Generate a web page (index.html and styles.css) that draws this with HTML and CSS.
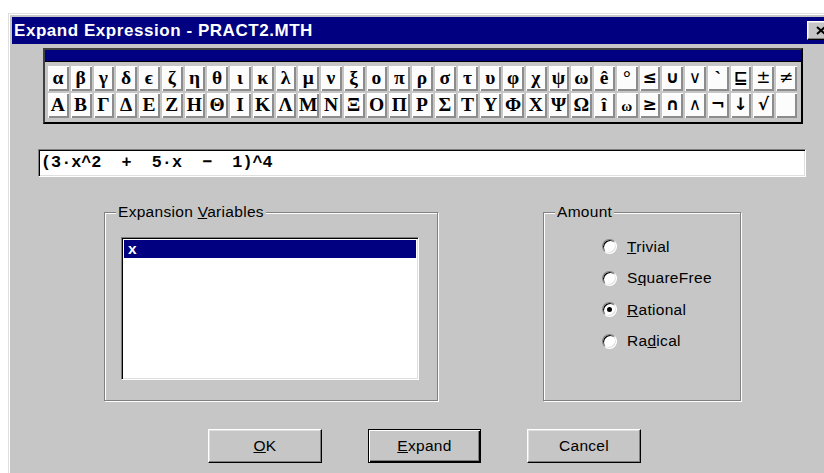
FILE: index.html
```html
<!DOCTYPE html>
<html lang="en">
<head>
<meta charset="utf-8">
<title>Expand Expression - PRACT2.MTH</title>
<link rel="stylesheet" href="styles.css">
</head>
<body>
<div class="window">
  <div class="titlebar">
    <span class="title">Expand Expression - PRACT2.MTH</span>
    <span class="close-btn">
      <svg width="10" height="9" viewBox="0 0 10 9"><path d="M1 1 L9 8 M9 1 L1 8" stroke="#000" stroke-width="2" fill="none"/></svg>
    </span>
  </div>
  <div class="client">
    <div class="palette">
      <div class="palette-caption"></div>
      <div class="symbols">
        <span class="sym">α</span><span class="sym">β</span><span class="sym">γ</span><span class="sym">δ</span><span class="sym">ϵ</span><span class="sym">ζ</span><span class="sym">η</span><span class="sym">θ</span><span class="sym">ι</span><span class="sym">κ</span><span class="sym">λ</span><span class="sym">μ</span><span class="sym">ν</span><span class="sym">ξ</span><span class="sym">ο</span><span class="sym">π</span><span class="sym">ρ</span><span class="sym">σ</span><span class="sym">τ</span><span class="sym">υ</span><span class="sym">φ</span><span class="sym">χ</span><span class="sym">ψ</span><span class="sym">ω</span><span class="sym">ê</span><span class="sym">°</span><span class="sym op">≤</span><span class="sym op">∪</span><span class="sym op thin">∨</span><span class="sym">`</span><span class="sym op">⊑</span><span class="sym op thin">±</span><span class="sym op thin">≠</span>
        <span class="sym">Α</span><span class="sym">Β</span><span class="sym">Γ</span><span class="sym">Δ</span><span class="sym">Ε</span><span class="sym">Ζ</span><span class="sym">Η</span><span class="sym">Θ</span><span class="sym">Ι</span><span class="sym">Κ</span><span class="sym">Λ</span><span class="sym">Μ</span><span class="sym">Ν</span><span class="sym">Ξ</span><span class="sym">Ο</span><span class="sym">Π</span><span class="sym">Ρ</span><span class="sym">Σ</span><span class="sym">Τ</span><span class="sym">Υ</span><span class="sym">Φ</span><span class="sym">Χ</span><span class="sym">Ψ</span><span class="sym">Ω</span><span class="sym">î</span><span class="sym small">ω</span><span class="sym op">≥</span><span class="sym op">∩</span><span class="sym op thin">∧</span><span class="sym op">¬</span><span class="sym op">↓</span><span class="sym op">√</span><span class="sym"></span>
      </div>
    </div>

    <div class="expr">(3·x^2  +  5·x  −  1)^4</div>

    <div class="groups">
      <div class="group vars">
        <span class="legend">Expansion <u>V</u>ariables</span>
        <div class="listbox">
          <div class="list-item selected">x</div>
        </div>
      </div>
      <div class="group amount">
        <span class="legend">Amount</span>
        <div class="radios">
          <div class="radio"><span class="dot"></span><span><u>T</u>rivial</span></div>
          <div class="radio"><span class="dot"></span><span>S<u>q</u>uareFree</span></div>
          <div class="radio"><span class="dot checked"></span><span><u>R</u>ational</span></div>
          <div class="radio"><span class="dot"></span><span>Ra<u>d</u>ical</span></div>
        </div>
      </div>
    </div>

    <div class="buttons">
      <div class="btn"><span><u>O</u>K</span></div>
      <div class="btn default"><span><u>E</u>xpand</span></div>
      <div class="btn"><span>Cancel</span></div>
    </div>
  </div>
</div>
</body>
</html>
```

FILE: styles.css
```css
html, body {
  margin: 0;
  padding: 0;
  width: 824px;
  height: 473px;
  overflow: hidden;
  background: #fff;
}

.window {
  box-sizing: border-box;
  width: 830px;
  height: 470px;
  margin: 13px 0 0 8px;
  padding: 3px;
  background: #c6c6c6;
  border: 1px solid;
  border-color: #dfdfdf #000 #000 #dfdfdf;
  box-shadow: inset 1px 1px 0 #fff;
  font-family: "Liberation Sans", Arial, sans-serif;
  font-size: 15.5px;
  letter-spacing: 0.3px;
  color: #000;
}

/* caption bar */
.titlebar {
  height: 27px;
  background: #000080;
  color: #fff;
  display: flex;
  align-items: center;
  justify-content: space-between;
  padding-left: 2px;
}
.title {
  font-weight: bold;
  font-size: 17px;
  letter-spacing: 0.55px;
  white-space: nowrap;
}
.close-btn {
  box-sizing: border-box;
  width: 24px;
  height: 19px;
  margin-right: 3px;
  padding-left: 3px;
  background: #c6c6c6;
  border: 1px solid;
  border-color: #fff #000 #000 #fff;
  box-shadow: inset -1px -1px 0 #808080, inset 1px 1px 0 #dfdfdf;
  display: flex;
  align-items: center;
  justify-content: center;
}

.client {
  display: flex;
  flex-direction: column;
  align-items: flex-start;
}

/* symbol palette */
.palette {
  box-sizing: border-box;
  width: 760px;
  height: 76px;
  margin: 4px 0 0 31px;
  border: 2px solid;
  border-color: #404040 #000 #000 #404040;
  display: flex;
  flex-direction: column;
}
.palette-caption {
  height: 11px;
  background: #000080;
  border-bottom: 1px solid #000;
}
.symbols {
  flex: 1;
  padding: 3px 3px 3px 2px;
  display: grid;
  grid-template-columns: repeat(33, 1fr);
  grid-template-rows: repeat(2, 27px);
  background: #c6c6c6;
}
.sym {
  display: flex;
  align-items: center;
  justify-content: center;
  background: #fcfcfc;
  box-shadow:
    inset 1px 1px 0 #c6c6c6,
    inset -1px -1px 0 #c6c6c6,
    inset 2px 2px 0 #fff,
    inset -3px -3px 0 #8c8c8c;
  font-family: "Liberation Serif", "DejaVu Serif", serif;
  font-weight: bold;
  font-size: 19.5px;
  letter-spacing: 0;
  line-height: 1;
  padding: 0 1px 2px 0;
}
.sym.op {
  font-family: "DejaVu Sans", sans-serif;
  font-size: 17px;
}
.sym.thin {
  font-weight: normal;
}
.sym.small {
  font-size: 15px;
  padding-top: 3px;
}

/* expression entry */
.expr {
  box-sizing: border-box;
  width: 768px;
  height: 28px;
  margin: 25px 0 0 26px;
  padding-left: 2px;
  background: #fff;
  border: 1px solid;
  border-color: #808080 #fff #fff #808080;
  box-shadow: inset 1px 1px 0 #000, inset -1px -1px 0 #dfdfdf;
  font-family: "Liberation Mono", "Courier New", monospace;
  font-weight: bold;
  font-size: 16.8px;
  letter-spacing: 0;
  line-height: 25px;
  white-space: pre;
}

/* group boxes */
.groups {
  display: flex;
  gap: 105px;
  margin: 35px 0 0 92px;
}
.group {
  box-sizing: border-box;
  height: 189px;
  border: 1px solid #808080;
  box-shadow: inset 1px 1px 0 #fff, 1px 1px 0 #fff;
  display: flex;
  flex-direction: column;
  align-items: flex-start;
}
.vars { width: 334px; }
.amount { width: 198px; }
.legend {
  margin: -10px 0 0 11px;
  padding: 0 2px;
  background: #c6c6c6;
  line-height: 18px;
  white-space: nowrap;
}

.listbox {
  box-sizing: border-box;
  width: 298px;
  height: 143px;
  margin: 16px 0 0 16px;
  padding: 2px;
  background: #fff;
  border: 1px solid;
  border-color: #808080 #fff #fff #808080;
  box-shadow: inset 1px 1px 0 #000, inset -1px -1px 0 #dfdfdf;
}
.list-item {
  height: 18px;
  line-height: 18px;
  padding-left: 4px;
  font-weight: bold;
}
.list-item.selected {
  background: #000080;
  color: #fff;
}

.radios {
  margin: 10px 0 0 58px;
  display: flex;
  flex-direction: column;
}
.radio {
  height: 31.5px;
  display: flex;
  align-items: center;
  gap: 10px;
  white-space: nowrap;
}
.dot {
  box-sizing: border-box;
  width: 15px;
  height: 15px;
  border-radius: 50%;
  background: #fff;
  border: 1px solid;
  border-color: #808080 #fff #fff #808080;
  box-shadow: inset 1px 1px 0 #000, inset -1px -1px 0 #dfdfdf;
  display: grid;
  place-items: center;
}
.dot.checked::after {
  content: "";
  width: 5px;
  height: 5px;
  border-radius: 50%;
  background: #000;
}

/* push buttons */
.buttons {
  display: flex;
  gap: 46px;
  margin: 28px 0 0 196px;
}
.btn {
  box-sizing: border-box;
  width: 114px;
  height: 34px;
  background: #c6c6c6;
  border: 1px solid;
  border-color: #fff #000 #000 #fff;
  box-shadow: inset -1px -1px 0 #808080, inset 1px 1px 0 #dfdfdf;
  display: flex;
  align-items: center;
  justify-content: center;
}
.btn.default {
  width: 113px;
  border-color: #000;
  box-shadow: inset 1px 1px 0 #fff, inset -1px -1px 0 #000, inset -2px -2px 0 #808080;
}
```
